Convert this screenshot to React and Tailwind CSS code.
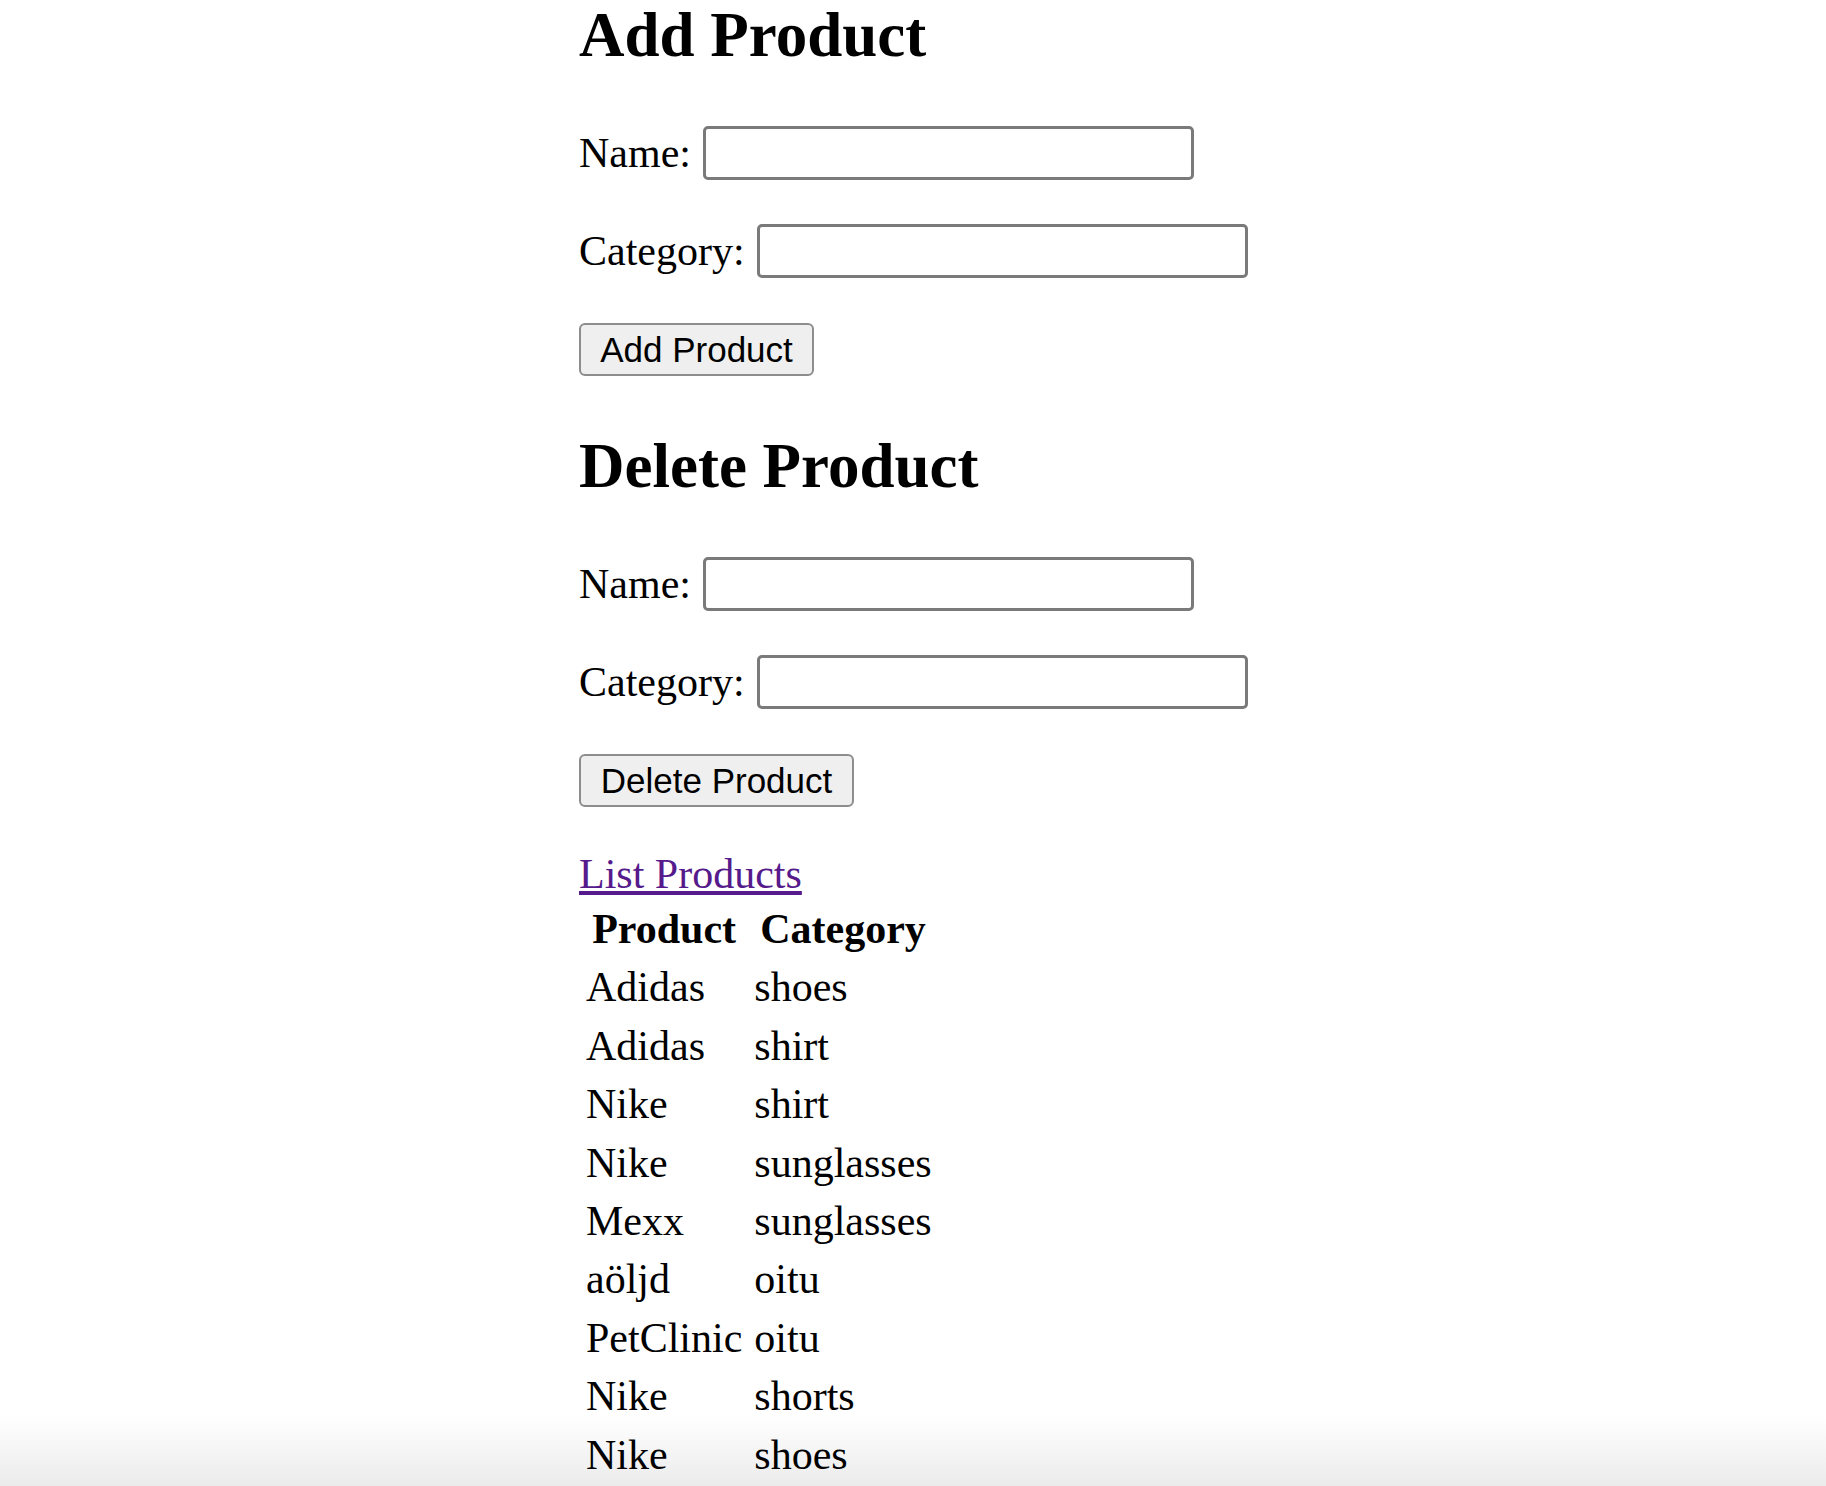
import React from 'react';

const products = [
  ['Adidas', 'shoes'],
  ['Adidas', 'shirt'],
  ['Nike', 'shirt'],
  ['Nike', 'sunglasses'],
  ['Mexx', 'sunglasses'],
  ['aöljd', 'oitu'],
  ['PetClinic', 'oitu'],
  ['Nike', 'shorts'],
  ['Nike', 'shoes'],
];

const Field = ({ label, className = '' }) => (
  <div className={`flex h-[54px] items-center ${className}`}>
    <label className="text-[42px] leading-[48px]">{label}</label>
    <input
      type="text"
      className="ml-[12px] h-[54px] w-[491px] rounded-[5px] border-[3px] border-[#7a7a7a] bg-white px-1 outline-none"
    />
  </div>
);

const FormButton = ({ children, width }) => (
  <button
    type="button"
    className={`h-[53px] ${width} rounded-[6px] border-2 border-[#8d8d8d] bg-[#efefef] text-[35px] leading-none text-black`}
    style={{ fontFamily: '"Liberation Sans", Arial, sans-serif' }}
  >
    {children}
  </button>
);

const ProductForm = ({ title, button, buttonWidth, className = '' }) => (
  <section className={className}>
    <h2 className="text-[63px] font-bold leading-[70px]">{title}</h2>
    <Field label="Name:" className="mt-[56px]" />
    <Field label="Category:" className="mt-[44px]" />
    <div className="mt-[45px]">
      <FormButton width={buttonWidth}>{button}</FormButton>
    </div>
  </section>
);

export default function App() {
  return (
    <div
      className="relative h-[1486px] overflow-hidden bg-white text-black"
      style={{ fontFamily: '"Liberation Serif", "Times New Roman", serif' }}
    >
      {/* bottom fade, sits behind the content */}
      <div className="pointer-events-none absolute inset-x-0 bottom-0 h-[70px] bg-gradient-to-b from-white to-[#ebebeb]" />

      <div className="relative pl-[579px]">
        <ProductForm title="Add Product" button="Add Product" buttonWidth="w-[235px]" />
        <ProductForm
          title="Delete Product"
          button="Delete Product"
          buttonWidth="w-[275px]"
          className="mt-[55px]"
        />

        <a href="#" className="mt-[43px] block w-fit text-[42px] leading-[48px] text-[#551a8b] underline">
          List Products
        </a>

        <table className="mt-[1px] border-separate border-spacing-[3px] text-[42px]">
          <thead>
            <tr>
              <th className="px-[4px] py-[4px] text-center font-bold leading-[47.4px]">Product</th>
              <th className="px-[5px] py-[4px] text-center font-bold leading-[47.4px]">Category</th>
            </tr>
          </thead>
          <tbody>
            {products.map(([name, cat], i) => (
              <tr key={i}>
                <td className="px-[4px] py-[4px] leading-[47.4px]">{name}</td>
                <td className="px-[5px] py-[4px] leading-[47.4px]">{cat}</td>
              </tr>
            ))}
          </tbody>
        </table>
      </div>
    </div>
  );
}
